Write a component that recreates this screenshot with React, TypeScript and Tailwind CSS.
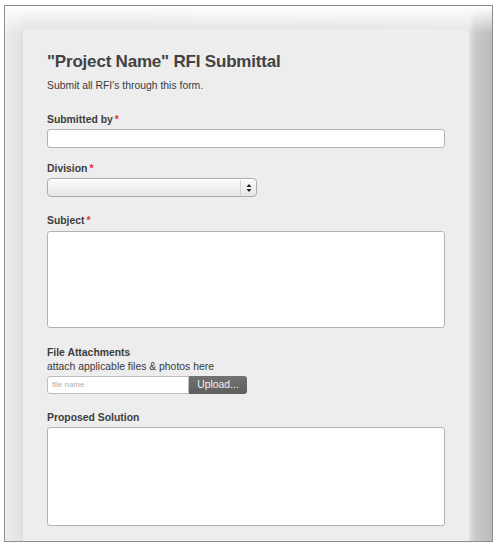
export default function App() {
  return (
    <div className="min-h-screen bg-white pl-[4px] pt-[5px] font-['Liberation_Sans',Arial,sans-serif]">
      {/* Frame around the screenshot */}
      <div className="w-[489px] h-[537px] border border-[#8c8c8c] overflow-hidden pl-[18px] pt-[23px] bg-[linear-gradient(to_bottom,#ffffff_0px,rgba(255,255,255,0)_28px),linear-gradient(to_right,#ececec,#e4e4e4_14px,#dedede_18px,#e2e2e2_464px,#cacaca_470px,#bbbbbb)]">
        {/* Form card */}
        <div className="w-[446px] h-full bg-[#ededed] rounded-tr-[5px] rounded-tl-[2px] px-6 pt-[22px]">
          <h1 className="text-[17px] leading-[22px] tracking-[-0.2px] font-bold text-[#424242]">
            "Project Name" RFI Submittal
          </h1>
          <p className="mt-[6px] text-[10.4px] leading-[14px] text-[#3a3a3a]">
            Submit all RFI's through this form.
          </p>

          {/* Submitted by */}
          <label className="block mt-[20px] text-[10.4px] leading-[14px] font-bold text-[#3d3d3d]">
            Submitted by<span className="text-[#e0342f] ml-[2px]">*</span>
          </label>
          <div className="mt-[2px] h-[19px] w-[398px] bg-white border border-[#b3b3b3] rounded-[3px]" />

          {/* Division */}
          <label className="block mt-[14px] text-[10.4px] leading-[14px] font-bold text-[#3d3d3d]">
            Division<span className="text-[#e0342f] ml-[2px]">*</span>
          </label>
          <div className="mt-[2px] h-[19px] w-[210px] flex items-center justify-end border border-[#acacac] rounded-[4px] bg-[linear-gradient(to_bottom,#fafafa,#e6e6e6)] shadow-[inset_0_1px_0_#ffffff]">
            <div className="h-[15px] w-px bg-[#d4d4d4] mr-[5px]" />
            <svg width="6" height="10" viewBox="0 0 6 10" className="mr-[4px]">
              <path d="M3 1 L5.5 4 L0.5 4 Z" fill="#222" />
              <path d="M3 9 L5.5 6 L0.5 6 Z" fill="#222" />
            </svg>
          </div>

          {/* Subject */}
          <label className="block mt-[17px] text-[10.4px] leading-[14px] font-bold text-[#3d3d3d]">
            Subject<span className="text-[#e0342f] ml-[2px]">*</span>
          </label>
          <div className="mt-[3px] h-[97px] w-[398px] bg-white border border-[#b3b3b3] rounded-[3px]" />

          {/* File Attachments */}
          <label className="block mt-[18px] text-[10.4px] leading-[14px] font-bold text-[#3d3d3d]">
            File Attachments
          </label>
          <p className="text-[10.4px] leading-[14px] text-[#3a3a3a]">attach applicable files &amp; photos here</p>
          <div className="mt-[2px] flex h-[18px]">
            <div className="w-[142px] h-full bg-white border border-[#bdbdbd] rounded-l-[3px] flex items-center pl-[4px] text-[8px] text-[#b0b0b0]">
              file name
            </div>
            <div className="w-[58px] h-full bg-[linear-gradient(to_bottom,#727272,#5e5e5e)] rounded-r-[3px] flex items-center justify-center text-[10.4px] text-[#f2f2f2]">
              Upload...
            </div>
          </div>

          {/* Proposed Solution */}
          <label className="block mt-[17px] text-[10.4px] leading-[14px] font-bold text-[#3d3d3d]">
            Proposed Solution
          </label>
          <div className="mt-[2px] h-[99px] w-[398px] bg-white border border-[#b3b3b3] rounded-[3px]" />
        </div>
      </div>
    </div>
  );
}
